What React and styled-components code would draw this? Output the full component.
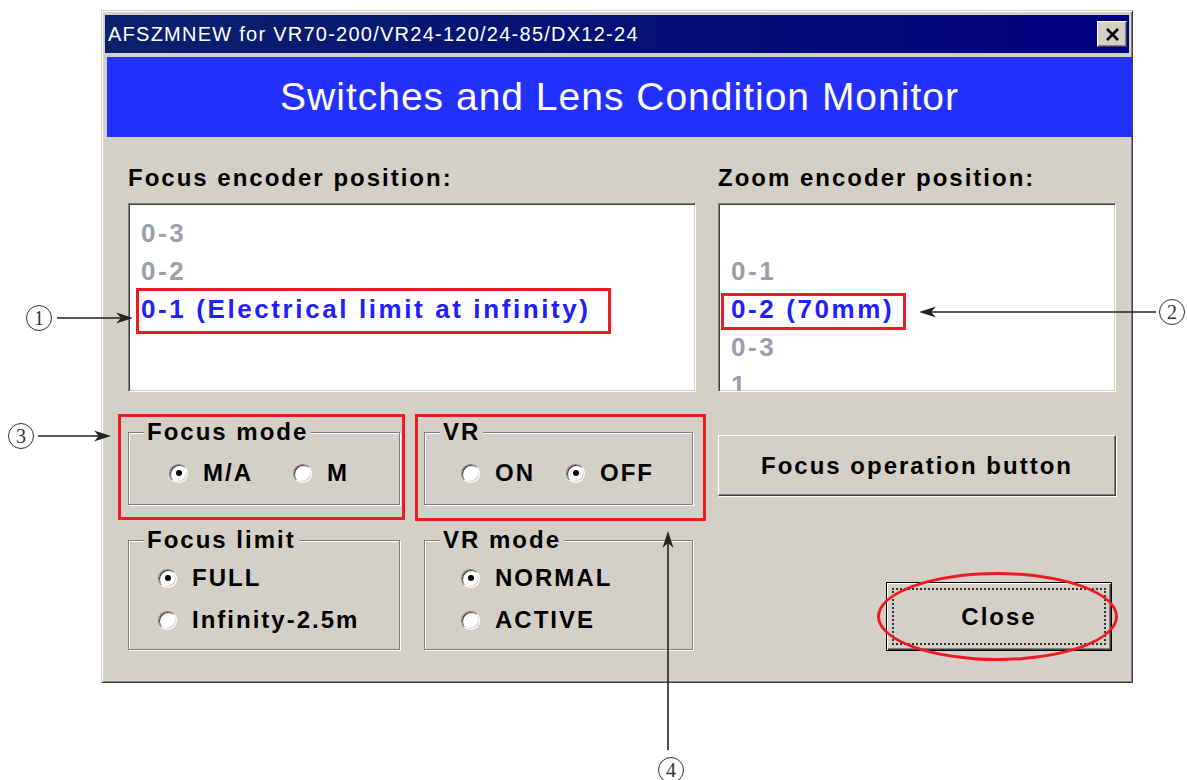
import React from "react";
import styled, { createGlobalStyle, css } from "styled-components";

const Globalstyle = createGlobalStyle`
  * {
    margin: 0;
    padding: 0;
    box-sizing: border-box;
  }
  body {
    background: #fff;
    font-family: "Liberation Sans", Arial, sans-serif;
  }
`;

// red annotation frame drawn over a control
const redBox = (p) =>
  p.$mark &&
  css`
    position: relative;
    &::after {
      content: "";
      position: absolute;
      top: ${p.$mark[0]}px;
      right: ${p.$mark[1]}px;
      bottom: ${p.$mark[2]}px;
      left: ${p.$mark[3]}px;
      border: 3px solid #ec1c24;
      border-radius: ${p.$round ? "50%" : "0"};
      pointer-events: none;
    }
  `;

const Page = styled.div`
  position: relative;
  width: 1187px;
  height: 780px;
  padding: 10px 0 0 101px;
  overflow: hidden;
`;

const Window = styled.div`
  width: 1032px;
  height: 673px;
  background: #d4d0c8;
  border: 1px solid;
  border-color: #d4d0c8 #404040 #404040 #d4d0c8;
  box-shadow: inset 1px 1px 0 #fff, inset -1px -1px 0 #808080;
  padding: 4px 3px 3px 3px;
  display: flex;
  flex-direction: column;
`;

const TitleBar = styled.div`
  height: 38px;
  display: flex;
  align-items: center;
  justify-content: space-between;
  padding: 0 2px 0 3px;
  background: linear-gradient(to right, #0c216c, #000080);
`;

const TitleText = styled.span`
  color: #fff;
  font-size: 20px;
  letter-spacing: 1.25px;
  white-space: nowrap;
`;

const TitleClose = styled.div`
  width: 30px;
  height: 26px;
  display: flex;
  align-items: center;
  justify-content: center;
  background: #d4d0c8;
  border: 1px solid;
  border-color: #fff #404040 #404040 #fff;
  box-shadow: inset -1px -1px 0 #808080;
`;

const Banner = styled.div`
  height: 80px;
  margin: 4px -3px 0 2px;
  background: #2430ff;
  color: #fff;
  font-size: 39px;
  letter-spacing: 1px;
  line-height: 80px;
  text-align: center;
  white-space: nowrap;
`;

const Body = styled.div`
  flex: 1;
  display: flex;
  gap: 22px;
  padding: 27px 13px 0 23px;
`;

const Column = styled.div`
  width: ${(p) => p.$w}px;
  display: flex;
  flex-direction: column;
`;

const Label = styled.div`
  font-weight: bold;
  font-size: 24px;
  letter-spacing: 2px;
  line-height: 28px;
  color: #000;
  white-space: nowrap;
`;

const ListBox = styled.div`
  margin-top: 11px;
  height: 189px;
  overflow: hidden;
  background: #fff;
  border: 1px solid;
  border-color: #808080 #fff #fff #808080;
  box-shadow: inset 1px 1px 0 #404040, inset -1px -1px 0 #d4d0c8;
  padding: 10px 0 0 12px;
`;

const Item = styled.div`
  height: 38px;
  line-height: 38px;
  font-weight: bold;
  font-size: 26px;
  letter-spacing: 2.6px;
  white-space: nowrap;
  color: ${(p) => (p.$active ? "#2020ff" : "#9c9cab")};
`;

const Mark = styled.span`
  display: inline-block;
  ${redBox}
`;

const Groups = styled.div`
  margin-top: 40px;
  display: grid;
  grid-template-columns: 272px 269px;
  column-gap: 24px;
  row-gap: 35px;
`;

const Frame = styled.div`
  position: relative;
  border: 1px solid #808080;
  box-shadow: inset 1px 1px 0 #fff, 1px 1px 0 #fff;
  display: flex;
  flex-direction: ${(p) => (p.$stack ? "column" : "row")};
  gap: ${(p) => (p.$stack ? "14px" : "0")};
  padding: ${(p) => (p.$stack ? "23px 0 15px" : "26px 0 17px")};
  padding-left: ${(p) => p.$pad}px;
  ${redBox}
`;

const Legend = styled.span`
  position: absolute;
  top: -15px;
  left: 15px;
  padding: 0 3px;
  background: #d4d0c8;
  font-weight: bold;
  font-size: 24px;
  letter-spacing: 2px;
  line-height: 28px;
  white-space: nowrap;
`;

const Option = styled.div`
  width: ${(p) => (p.$w ? `${p.$w}px` : "auto")};
  height: 28px;
  display: flex;
  align-items: center;
  gap: 15px;
  font-weight: bold;
  font-size: 24px;
  letter-spacing: 2px;
  white-space: nowrap;
`;

const Radio = styled.span`
  width: 19px;
  height: 19px;
  flex: none;
  border-radius: 50%;
  background: #fff;
  border: 1px solid;
  border-color: #808080 #fff #fff #808080;
  box-shadow: inset 1px 1px 0 #404040, inset -1px -1px 0 #d4d0c8;
  display: flex;
  align-items: center;
  justify-content: center;
`;

const Dot = styled.span`
  width: 6px;
  height: 6px;
  border-radius: 50%;
  background: #000;
`;

const Button = styled.div`
  margin-top: 43px;
  height: 61px;
  display: flex;
  align-items: center;
  justify-content: center;
  background: #d4d0c8;
  border: 1px solid;
  border-color: #fff #404040 #404040 #fff;
  box-shadow: inset -1px -1px 0 #808080, 1px 1px 0 #fff;
  font-weight: bold;
  font-size: 24px;
  letter-spacing: 2px;
  white-space: nowrap;
`;

const CloseWrap = styled.div`
  margin: 86px 4px 0 0;
  align-self: flex-end;
  ${redBox}
`;

const CloseButton = styled.div`
  width: 226px;
  height: 69px;
  padding: 5px;
  display: flex;
  background: #d4d0c8;
  border: 1px solid #000;
  box-shadow: inset 1px 1px 0 #fff, inset -1px -1px 0 #404040,
    inset -2px -2px 0 #808080;
`;

const FocusRect = styled.div`
  flex: 1;
  display: flex;
  align-items: center;
  justify-content: center;
  border: 2px dotted #333;
  font-weight: bold;
  font-size: 24px;
  letter-spacing: 2px;
`;

const Overlay = styled.svg`
  position: absolute;
  top: 0;
  left: 0;
  pointer-events: none;
`;

const Callout = styled.span`
  position: absolute;
  left: ${(p) => p.$x - 13}px;
  top: ${(p) => p.$y - 13}px;
  width: 26px;
  height: 26px;
  border: 1.3px solid #333;
  border-radius: 50%;
  display: flex;
  align-items: center;
  justify-content: center;
  font-family: "Liberation Serif", "Times New Roman", serif;
  font-size: 20px;
  line-height: 1;
  color: #333;
`;

const RadioOption = ({ label, on, w }) => (
  <Option $w={w}>
    <Radio>{on && <Dot />}</Radio>
    {label}
  </Option>
);

const Arrow = ({ x1, y1, x2, y2 }) => {
  const a = Math.atan2(y2 - y1, x2 - x1);
  const pt = (back, side) => [
    x2 - back * Math.cos(a) - side * Math.sin(a),
    y2 - back * Math.sin(a) + side * Math.cos(a),
  ];
  const [p1, p2, p3] = [pt(17, -5.5), pt(12, 0), pt(17, 5.5)];
  const end = pt(12, 0);
  return (
    <g>
      <line x1={x1} y1={y1} x2={end[0]} y2={end[1]} stroke="#222" strokeWidth="1.6" />
      <path d={`M${x2} ${y2} L${p1[0]} ${p1[1]} L${p2[0]} ${p2[1]} L${p3[0]} ${p3[1]} Z`} fill="#222" />
    </g>
  );
};

export default function App() {
  return (
    <Page>
      <Globalstyle />
      <Window>
        <TitleBar>
          <TitleText>AFSZMNEW for VR70-200/VR24-120/24-85/DX12-24</TitleText>
          <TitleClose>
            <svg width="15" height="13" viewBox="0 0 15 13">
              <path d="M2 1 L13 12 M13 1 L2 12" stroke="#000" strokeWidth="2.6" />
            </svg>
          </TitleClose>
        </TitleBar>
        <Banner>Switches and Lens Condition Monitor</Banner>
        <Body>
          <Column $w={568}>
            <Label>Focus encoder position:</Label>
            <ListBox>
              <Item>0-3</Item>
              <Item>0-2</Item>
              <Item $active>
                <Mark $mark={[-2, -20, -6, -5]}>0-1 (Electrical limit at infinity)</Mark>
              </Item>
            </ListBox>
            <Groups>
              <Frame $pad={40} $mark={[-19, -6, -16, -11]}>
                <Legend>Focus mode</Legend>
                <RadioOption label="M/A" on w={124} />
                <RadioOption label="M" />
              </Frame>
              <Frame $pad={36} $mark={[-19, -14, -17, -10]}>
                <Legend>VR</Legend>
                <RadioOption label="ON" w={105} />
                <RadioOption label="OFF" on />
              </Frame>
              <Frame $stack $pad={29}>
                <Legend>Focus limit</Legend>
                <RadioOption label="FULL" on />
                <RadioOption label="Infinity-2.5m" />
              </Frame>
              <Frame $stack $pad={36}>
                <Legend>VR mode</Legend>
                <RadioOption label="NORMAL" on />
                <RadioOption label="ACTIVE" />
              </Frame>
            </Groups>
          </Column>
          <Column $w={398}>
            <Label>Zoom encoder position:</Label>
            <ListBox>
              <Item>&nbsp;</Item>
              <Item>0-1</Item>
              <Item $active>
                <Mark $mark={[3, -12, -2, -10]}>0-2 (70mm)</Mark>
              </Item>
              <Item>0-3</Item>
              <Item>1</Item>
            </ListBox>
            <Button>Focus operation button</Button>
            <CloseWrap $mark={[-10, -6, -10, -9]} $round>
              <CloseButton>
                <FocusRect>Close</FocusRect>
              </CloseButton>
            </CloseWrap>
          </Column>
        </Body>
      </Window>

      <Overlay width="1187" height="780">
        <Arrow x1={57} y1={318} x2={133} y2={318} />
        <Arrow x1={1156} y1={312} x2={919} y2={312} />
        <Arrow x1={38} y1={436} x2={111} y2={436} />
        <Arrow x1={668} y1={750} x2={668} y2={531} />
      </Overlay>
      <Callout $x={39} $y={318}>1</Callout>
      <Callout $x={1172} $y={312}>2</Callout>
      <Callout $x={21} $y={436}>3</Callout>
      <Callout $x={671} $y={770}>4</Callout>
    </Page>
  );
}
